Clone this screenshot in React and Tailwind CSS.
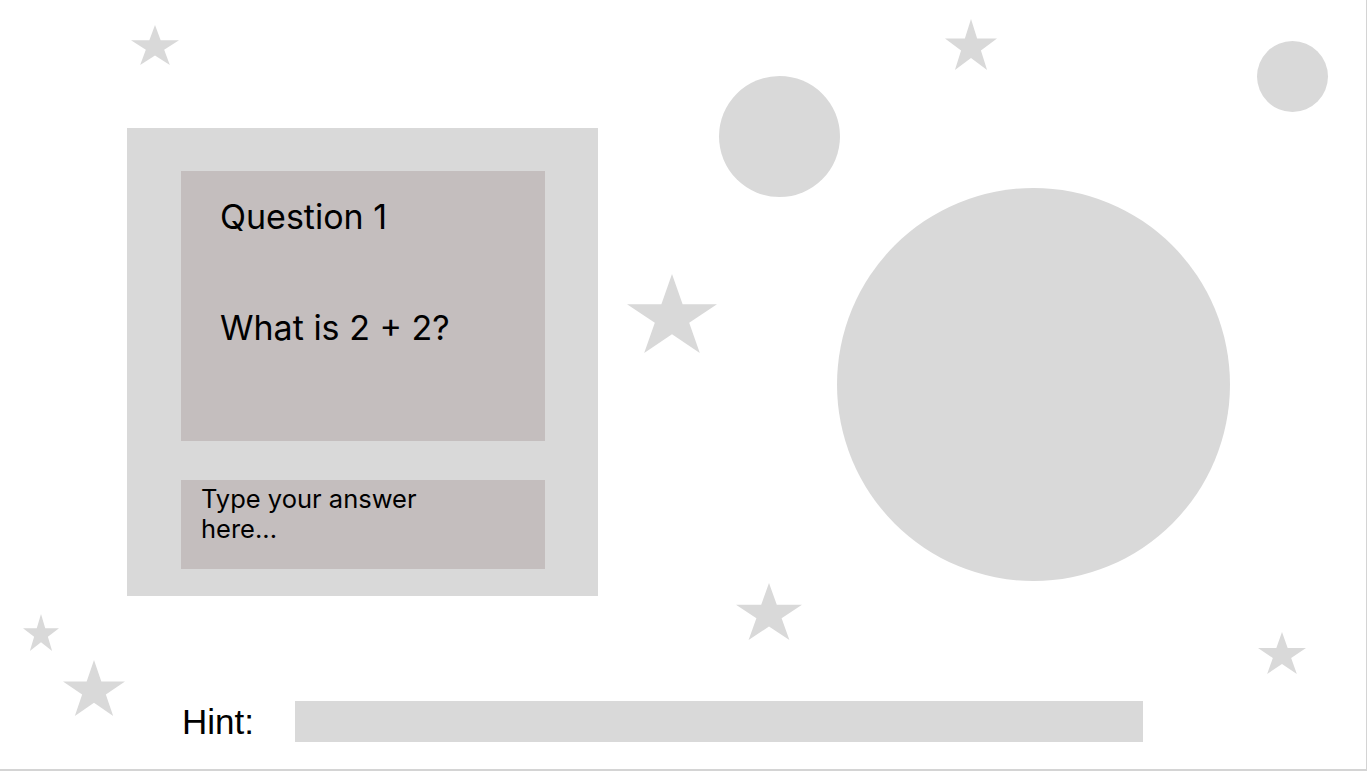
import React from 'react';

const Star = ({ className }) => (
  <svg className={className} viewBox="0 0 100 100" preserveAspectRatio="none">
    <polygon
      points="50,0 61.8,38.2 100,38.2 69.1,61.8 80.9,100 50,76.4 19.1,100 30.9,61.8 0,38.2 38.2,38.2"
      fill="#d9d9d9"
    />
  </svg>
);

const App = () => {
  return (
    <div className="w-[1368px] h-[771px] bg-white overflow-hidden" style={{ fontFamily: 'Inter, "Liberation Sans", sans-serif' }}>
      <div className="relative w-[1367px] h-[771px] border-r border-b-2 border-[#d4d4d4]">
        {/* { decoraciones del lienzo } */}
        <Star className="absolute left-[131px] top-[25px] w-[48px] h-[40px]" />
        <Star className="absolute left-[945px] top-[19px] w-[52px] h-[51px]" />
        <Star className="absolute left-[627px] top-[274px] w-[90px] h-[79px]" />
        <Star className="absolute left-[736px] top-[583px] w-[66px] h-[57px]" />
        <Star className="absolute left-[23px] top-[614px] w-[36px] h-[37px]" />
        <Star className="absolute left-[63px] top-[660px] w-[62px] h-[56px]" />
        <Star className="absolute left-[1258px] top-[632px] w-[48px] h-[42px]" />
        <div className="absolute left-[719px] top-[76px] w-[121px] h-[121px] rounded-full bg-[#d9d9d9]" />
        <div className="absolute left-[1257px] top-[41px] w-[71px] h-[71px] rounded-full bg-[#d9d9d9]" />
        <div className="absolute left-[837px] top-[188px] w-[393px] h-[393px] rounded-full bg-[#d9d9d9]" />

        {/* { tarjeta de pregunta } */}
        <div className="relative pt-[128px] pl-[127px]">
          <div className="w-[471px] h-[468px] bg-[#d9d9d9] pt-[43px] pl-[54px] flex flex-col gap-[39px]">
            <div className="w-[364px] h-[270px] bg-[#c4bebe] pl-[39px] pt-[29px] text-black flex flex-col gap-[77px]">
              <p className="text-[34px] leading-[34px]">Question 1</p>
              <p className="text-[34px] leading-[34px]">What is 2 + 2?</p>
            </div>
            <div className="w-[364px] h-[89px] bg-[#c4bebe] pl-[20px] pt-[4px]">
              <p className="w-[240px] text-[25.5px] leading-[30px] text-black">Type your answer here...</p>
            </div>
          </div>
        </div>

        {/* { pista } */}
        <div className="relative flex items-center mt-[105px] pl-[182px]">
          <span className="text-[35px] leading-[35px] text-black w-[113px]" style={{ fontFamily: '"Liberation Sans", Arial, sans-serif' }}>Hint:</span>
          <div className="w-[848px] h-[41px] bg-[#d9d9d9]" />
        </div>
      </div>
    </div>
  );
};

export default App;
